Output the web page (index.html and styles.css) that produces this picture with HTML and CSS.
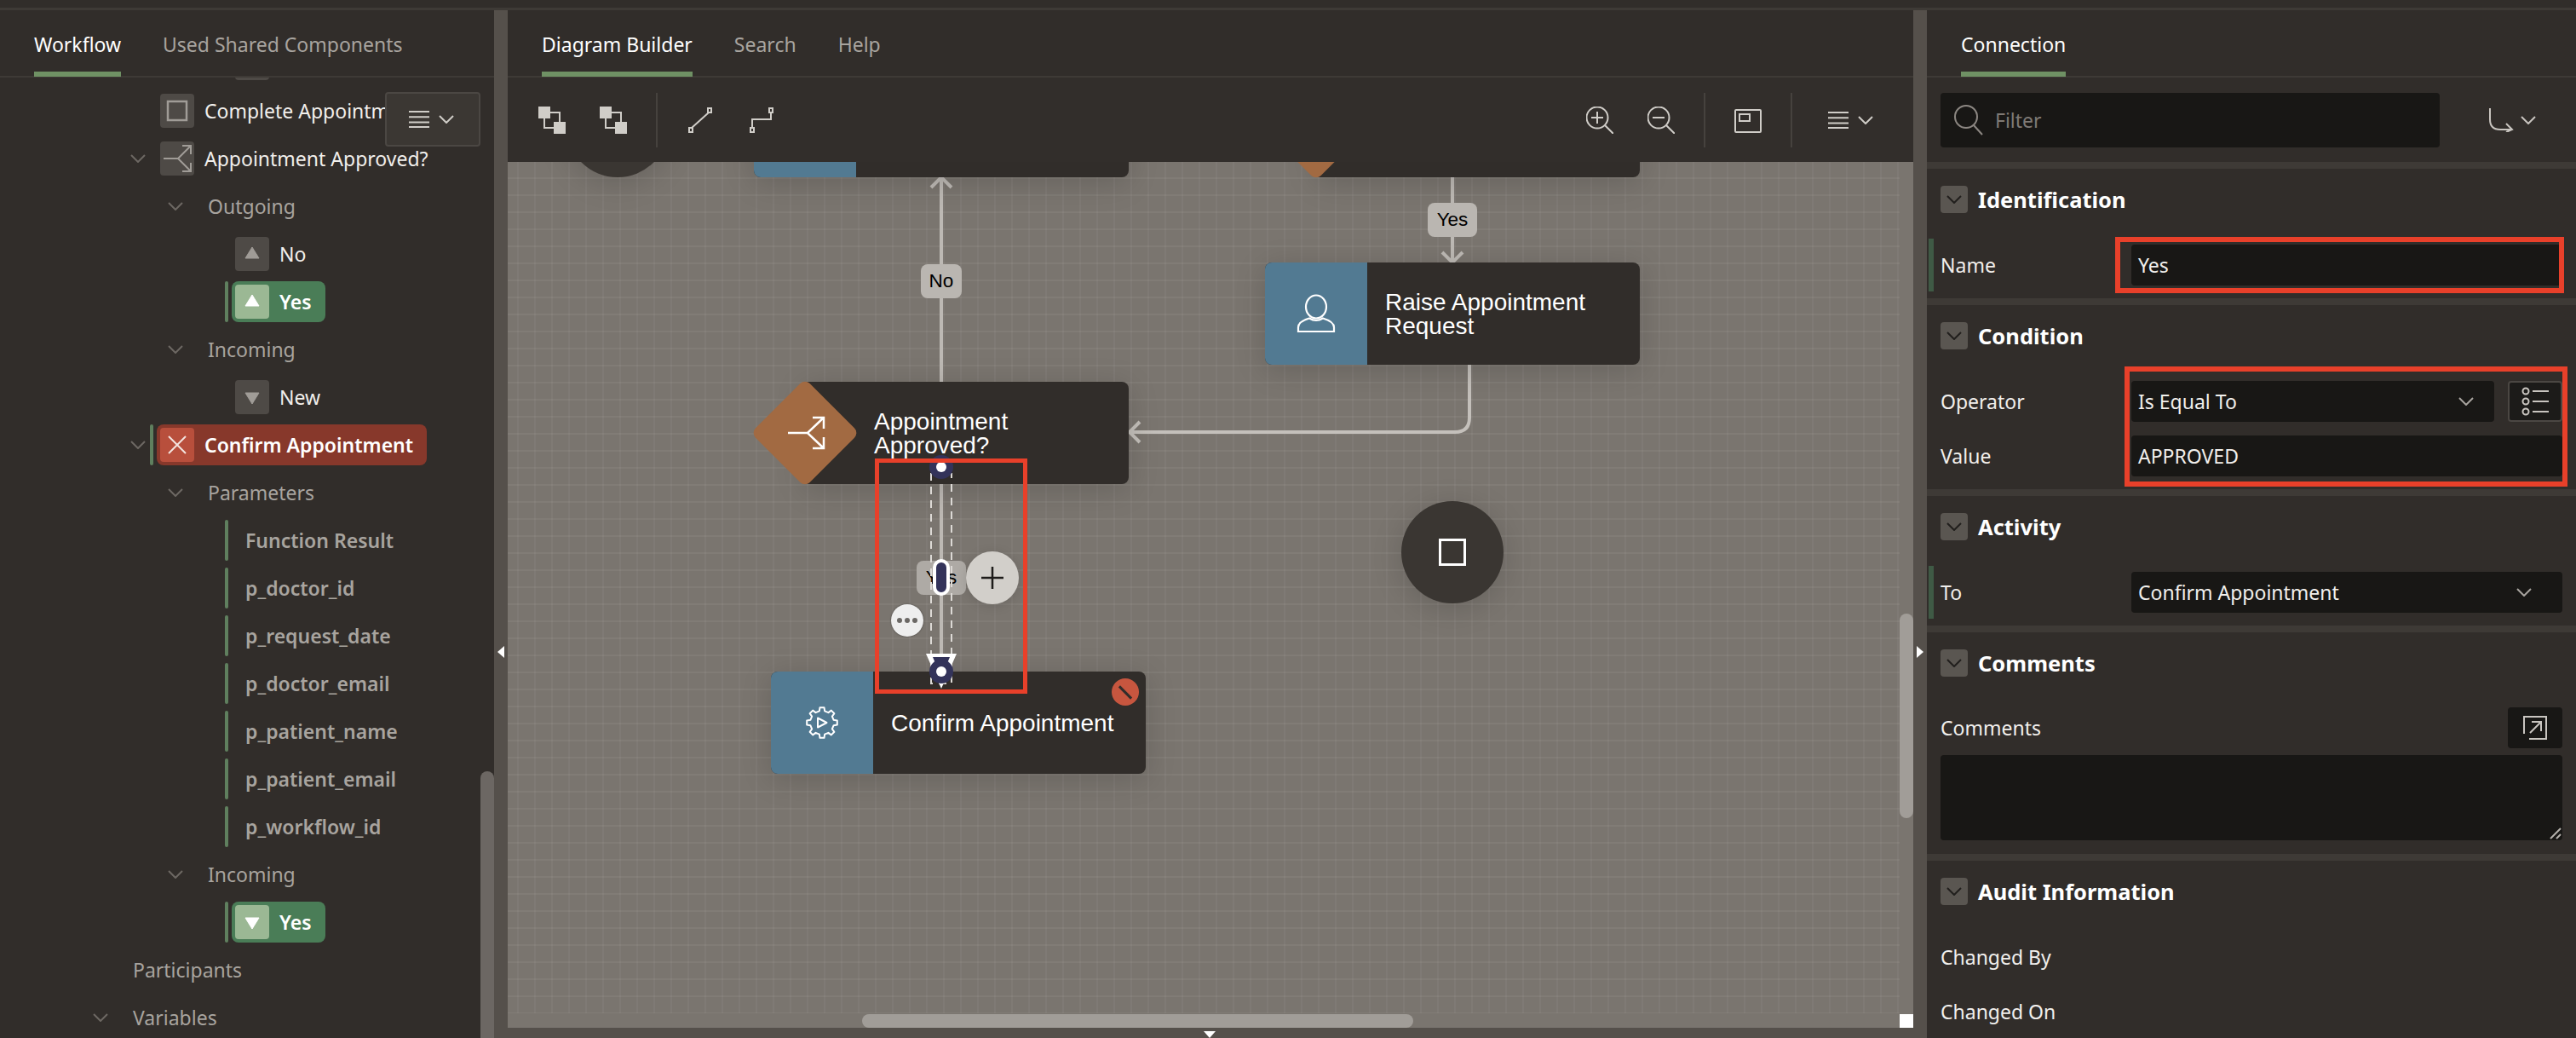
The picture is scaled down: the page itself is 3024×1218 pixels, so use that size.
FILE: index.html
```html
<!DOCTYPE html>
<html lang="en">

<head>
  <meta charset="UTF-8" />
  <title>Workflow Designer</title>
  <link rel="stylesheet" href="styles.css">
</head>

<body>
  <svg class="defs" width="0" height="0">
    <symbol id="chev" viewBox="0 0 18 10"><path d="M1 1l8 8 8-8" fill="none" stroke="currentColor" stroke-width="2" /></symbol>
    <symbol id="tri-up" viewBox="0 0 40 40"><path d="M12 25L20 12l8 13z" fill="currentColor" stroke="currentColor" stroke-width="1" /></symbol>
    <symbol id="tri-down" viewBox="0 0 40 40"><path d="M12 15h16l-8 13z" fill="currentColor" stroke="currentColor" stroke-width="1" /></symbol>
    <symbol id="burger" viewBox="0 0 24 20"><path d="M0 1h24M0 7.3h24M0 13.6h24M0 19h24" fill="none" stroke="currentColor" stroke-width="2" /></symbol>
  </svg>

  <div class="top-strip"></div>

  <div class="workspace">
    <section class="left-panel">
      <div class="tabs">
        <div class="tab active">Workflow</div>
        <div class="tab">Used Shared Components</div>
      </div>
      <div class="tree-wrap">
        <div class="tree">
          <div class="row lvl-4"><span class="ico"></span></div>
          <div class="row lvl-2 no-chev">
            <span class="ico"><svg width="40" height="40"><rect x="9" y="9" width="22" height="22" fill="none" stroke="#a09c97" stroke-width="2.5" /></svg></span>
            <span class="txt">Complete Appointment</span>
          </div>
          <div class="row lvl-2">
            <svg class="chev"><use href="#chev" /></svg>
            <span class="ico"><svg width="40" height="40" fill="none" stroke="#a09c97" stroke-width="2"><path d="M4 20h17l15-15M21 20l15 15M26 5h10v10M26 35h10V25" /></svg></span>
            <span class="txt">Appointment Approved?</span>
          </div>
          <div class="row lvl-3"><svg class="chev"><use href="#chev" /></svg><span class="lbl">Outgoing</span></div>
          <div class="row lvl-4">
            <span class="ico tri"><svg width="40" height="40"><use href="#tri-up" /></svg></span>
            <span class="txt">No</span>
          </div>
          <div class="row lvl-4 marked">
            <i class="mark"></i>
            <span class="pill green">
              <span class="ico"><svg width="40" height="40"><use href="#tri-up" /></svg></span>
              <span class="txt">Yes</span>
            </span>
          </div>
          <div class="row lvl-3"><svg class="chev"><use href="#chev" /></svg><span class="lbl">Incoming</span></div>
          <div class="row lvl-4">
            <span class="ico tri"><svg width="40" height="40"><use href="#tri-down" /></svg></span>
            <span class="txt">New</span>
          </div>
          <div class="row lvl-2 marked">
            <svg class="chev"><use href="#chev" /></svg>
            <i class="mark"></i>
            <span class="pill red">
              <span class="ico"><svg width="40" height="40" fill="none" stroke="#f3e4df" stroke-width="2"><path d="M10 10l20 20M30 10L10 30" /></svg></span>
              <span class="txt">Confirm Appointment</span>
            </span>
          </div>
          <div class="row lvl-3"><svg class="chev"><use href="#chev" /></svg><span class="lbl">Parameters</span></div>
          <div class="row param"><i class="mark"></i><span class="lbl">Function Result</span></div>
          <div class="row param"><i class="mark"></i><span class="lbl">p_doctor_id</span></div>
          <div class="row param"><i class="mark"></i><span class="lbl">p_request_date</span></div>
          <div class="row param"><i class="mark"></i><span class="lbl">p_doctor_email</span></div>
          <div class="row param"><i class="mark"></i><span class="lbl">p_patient_name</span></div>
          <div class="row param"><i class="mark"></i><span class="lbl">p_patient_email</span></div>
          <div class="row param"><i class="mark"></i><span class="lbl">p_workflow_id</span></div>
          <div class="row lvl-3"><svg class="chev"><use href="#chev" /></svg><span class="lbl">Incoming</span></div>
          <div class="row lvl-4 marked">
            <i class="mark"></i>
            <span class="pill green">
              <span class="ico"><svg width="40" height="40"><use href="#tri-down" /></svg></span>
              <span class="txt">Yes</span>
            </span>
          </div>
          <div class="row lvl-1 no-chev"><span class="lbl">Participants</span></div>
          <div class="row lvl-1"><svg class="chev"><use href="#chev" /></svg><span class="lbl">Variables</span></div>
        </div>
        <div class="tree-menu">
          <svg class="burger"><use href="#burger" /></svg>
          <svg class="chev"><use href="#chev" /></svg>
        </div>
        <div class="tree-scroll"></div>
      </div>
    </section>

    <div class="splitter"><i class="arrow-left"></i></div>

    <main class="center">
      <div class="tabs">
        <div class="tab active">Diagram Builder</div>
        <div class="tab">Search</div>
        <div class="tab">Help</div>
      </div>

      <div class="toolbar">
        <div class="tb-group">
          <svg class="tb-icon" viewBox="0 0 32 32" fill="#d0cdc8" stroke="#d0cdc8">
            <rect x="0.5" y="0.5" width="13" height="13" />
            <rect x="18.5" y="18.5" width="13" height="13" />
            <rect x="7" y="7" width="18" height="18" fill="none" stroke-width="2" />
          </svg>
          <svg class="tb-icon" viewBox="0 0 32 32" fill="#d0cdc8" stroke="#d0cdc8">
            <rect x="0.5" y="0.5" width="13" height="13" />
            <rect x="18.5" y="18.5" width="13" height="13" />
            <path d="M13 7h12v12M7 13v12h12" fill="none" stroke-width="2" />
          </svg>
        </div>
        <i class="tb-sep"></i>
        <div class="tb-group">
          <svg class="tb-icon" viewBox="0 0 32 32" fill="none" stroke="#d0cdc8" stroke-width="2">
            <rect x="25" y="2" width="4" height="5" /><rect x="3" y="25" width="4" height="5" />
            <path d="M26 7L6 25" />
          </svg>
          <svg class="tb-icon" viewBox="0 0 32 32" fill="none" stroke="#d0cdc8" stroke-width="2">
            <rect x="25" y="2" width="4" height="5" /><rect x="3" y="25" width="4" height="5" />
            <path d="M27 7v8H5v10" />
          </svg>
        </div>
        <div class="tb-spacer"></div>
        <div class="tb-group">
          <svg class="tb-icon" viewBox="0 0 32 32" fill="none" stroke="#d0cdc8" stroke-width="2">
            <circle cx="13" cy="13" r="12.5" /><path d="M22 22l10 10M13 6v14M6 13h14" />
          </svg>
          <svg class="tb-icon" viewBox="0 0 32 32" fill="none" stroke="#d0cdc8" stroke-width="2">
            <circle cx="13" cy="13" r="12.5" /><path d="M22 22l10 10M6 13h14" />
          </svg>
        </div>
        <i class="tb-sep"></i>
        <svg class="tb-icon" viewBox="0 0 32 32" fill="none" stroke="#d0cdc8" stroke-width="2">
          <rect x="1" y="4" width="30" height="26" rx="1" /><rect x="6" y="9" width="12" height="8" />
        </svg>
        <i class="tb-sep"></i>
        <div class="tb-menu">
          <svg class="burger"><use href="#burger" /></svg>
          <svg class="chev"><use href="#chev" /></svg>
        </div>
      </div>

      <div class="canvas">
        <svg class="wires" viewBox="596 190 1650 1016" width="1650" height="1016" fill="none" stroke="#bdb9b4" stroke-width="4">
          <path d="M1105 208v240M1093 220l12-12 12 12" />
          <path d="M1705 208v100M1693 296l12 12 12-12" />
          <path d="M1725 428v62q0 17-17 17H1326M1338 495l-12 12 12 12" stroke="#c4c0bb" />
          <path d="M1105 568v200" />
        </svg>

        <div class="circle start"></div>

        <div class="node top-left">
          <div class="node-icon"></div>
          <div class="node-text"></div>
        </div>
        <div class="node decision top-right">
          <div class="diamond"></div>
          <div class="node-text"></div>
        </div>
        <div class="node decision approved">
          <div class="diamond"></div>
          <svg class="diamond-icon" width="48" height="48" fill="none" stroke="#fff" stroke-width="2.5">
            <path d="M2 24h23l19-18M25 24l19 18M31 6h13v13M31 42h13V29" />
          </svg>
          <div class="node-text">Appointment<br />Approved?</div>
        </div>
        <div class="node raise">
          <div class="node-icon">
            <svg width="48" height="48" viewBox="-24 -24 48 48" fill="none" stroke="#fff" stroke-width="2.2">
              <ellipse cx="0" cy="-8" rx="12" ry="13.5" />
              <path d="M-21 21v-5c0-6 8-9 13-10.500 5 3 11 3 16 0 5 1.500 13 4.500 13 10.500v5z" />
            </svg>
          </div>
          <div class="node-text">Raise Appointment<br />Request</div>
        </div>
        <div class="node confirm">
          <div class="node-icon">
            <svg width="44" height="44" viewBox="-22 -22 44 44" fill="none" stroke="#fff" stroke-width="2" stroke-linejoin="round">
              <polygon points="-3.15,-13.64 -2.5,-17.8 2.5,-17.8 3.15,-13.64 7.42,-11.87 10.83,-14.38 14.38,-10.83 11.87,-7.42 13.64,-3.15 17.8,-2.5 17.8,2.5 13.64,3.15 11.87,7.42 14.38,10.83 10.83,14.38 7.42,11.87 3.15,13.64 2.5,17.8 -2.5,17.8 -3.15,13.64 -7.42,11.87 -10.83,14.38 -14.38,10.83 -11.87,7.42 -13.64,3.15 -17.8,2.5 -17.8,-2.5 -13.64,-3.15 -11.87,-7.42 -14.38,-10.83 -10.83,-14.38 -7.42,-11.87" />
              <path d="M-5-5.500V5.500L5.500 0z" />
            </svg>
          </div>
          <div class="node-text">Confirm Appointment</div>
          <div class="node-badge"><i></i></div>
        </div>
        <div class="circle end"><i></i></div>

        <div class="edge-label label-no">No</div>
        <div class="edge-label label-yes">Yes</div>
        <div class="edge-label label-sel">Yes</div>

        <svg class="wires select" viewBox="596 190 1650 1016" width="1650" height="1016" fill="none">
          <path d="M1093 555V802h24V555" stroke="#dcd9d5" stroke-width="2" stroke-dasharray="9 7" />
          <path d="M1087 767h36l-18 41z" fill="#fff" />
          <path d="M1095 771h20l-10 24z" fill="#33335a" />
          <circle cx="1105" cy="548" r="14" fill="#33335a" />
          <circle cx="1105" cy="548" r="6" fill="#fff" />
          <circle cx="1105" cy="788" r="14" fill="#33335a" />
          <circle cx="1105" cy="788" r="6" fill="#fff" />
          <rect x="1097" y="658" width="16" height="39" rx="8" fill="#33335a" stroke="#fff" stroke-width="4" />
        </svg>

        <div class="edge-btn plus">
          <svg width="28" height="28" stroke="#1e1c1a" stroke-width="2.5"><path d="M14 1v26M1 14h26" /></svg>
        </div>
        <div class="edge-btn more"><i></i><i></i><i></i></div>

        <div class="callout"></div>

        <div class="vscroll"><div class="vthumb"></div></div>
        <div class="hscroll"><div class="hthumb"></div></div>
        <div class="corner"></div>
      </div>

      <div class="bottom-strip"><i class="arrow-down"></i></div>
    </main>

    <div class="splitter"><i class="arrow-right"></i></div>

    <aside class="right-panel">
      <div class="tabs">
        <div class="tab active">Connection</div>
      </div>

      <div class="filter-row">
        <div class="filter">
          <svg width="34" height="36" fill="none" stroke="#8c8782" stroke-width="2"><circle cx="14" cy="14" r="13" /><path d="M23 24l10 11" /></svg>
          <span>Filter</span>
        </div>
        <svg class="route" width="30" height="28" fill="none" stroke="#c9c5c0" stroke-width="2"><path d="M2 0v13q0 12 12 12h14M21 18l7 7-7 3" /></svg>
        <svg class="chev"><use href="#chev" /></svg>
      </div>

      <section class="group">
        <header class="group-head"><span class="toggle"><svg class="chev"><use href="#chev" /></svg></span><h2>Identification</h2></header>
        <div class="prop required"><label>Name</label><div class="field">Yes</div></div>
      </section>

      <section class="group">
        <header class="group-head"><span class="toggle"><svg class="chev"><use href="#chev" /></svg></span><h2>Condition</h2></header>
        <div class="prop">
          <label>Operator</label>
          <div class="field select short">Is Equal To<svg class="chev"><use href="#chev" /></svg></div>
          <span class="list-btn">
            <svg width="32" height="36" fill="none" stroke="#c9c5c0" stroke-width="2">
              <circle cx="5" cy="6" r="3.500" /><circle cx="5" cy="18" r="3.500" /><circle cx="5" cy="30" r="3.500" />
              <path d="M13 6h19M13 18h19M13 30h19" />
            </svg>
          </span>
        </div>
        <div class="prop gap"><label>Value</label><div class="field">APPROVED</div></div>
      </section>

      <section class="group">
        <header class="group-head"><span class="toggle"><svg class="chev"><use href="#chev" /></svg></span><h2>Activity</h2></header>
        <div class="prop required"><label>To</label><div class="field select">Confirm Appointment<svg class="chev"><use href="#chev" /></svg></div></div>
      </section>

      <section class="group">
        <header class="group-head"><span class="toggle"><svg class="chev"><use href="#chev" /></svg></span><h2>Comments</h2></header>
        <div class="comment-head">
          <label>Comments</label>
          <span class="expand-btn">
            <svg width="30" height="30" fill="none" stroke="#c9c5c0" stroke-width="2"><path d="M2 22V2h26v26H8M9 21L22 8M11 8h11v11" /></svg>
          </span>
        </div>
        <div class="comment-box">
          <svg class="grip" width="14" height="14" stroke="#b5b1ac" stroke-width="2"><path d="M1 13L13 1M8 13l5-5" /></svg>
        </div>
      </section>

      <section class="group">
        <header class="group-head"><span class="toggle"><svg class="chev"><use href="#chev" /></svg></span><h2>Audit Information</h2></header>
        <div class="prop"><label>Changed By</label></div>
        <div class="prop gap"><label>Changed On</label></div>
      </section>

      <div class="callout name-box"></div>
      <div class="callout cond-box"></div>
    </aside>
  </div>
</body>

</html>
```
FILE: styles.css
```css
* {
  box-sizing: border-box;
}

body {
  margin: 0;
  width: 3024px;
  height: 1218px;
  overflow: hidden;
  background: #312d2a;
  color: #f1efec;
  font-family: "Noto Sans", sans-serif;
  font-size: 23px;
}

.defs {
  position: absolute;
}

.chev {
  width: 18px;
  height: 10px;
  flex: none;
  color: #6d6863;
}

.burger {
  width: 24px;
  height: 20px;
  flex: none;
}

.top-strip {
  height: 12px;
  border-bottom: 3px solid #3e3a36;
}

.workspace {
  display: flex;
  height: 1206px;
}

.splitter {
  width: 16px;
  flex: none;
  background: #55504b;
  position: relative;
}

.arrow-left,
.arrow-right {
  position: absolute;
  top: 746px;
  width: 0;
  height: 0;
  border-top: 7px solid transparent;
  border-bottom: 7px solid transparent;
}

.arrow-left {
  left: 4px;
  border-right: 8px solid #fff;
}

.arrow-right {
  left: 4px;
  border-left: 8px solid #fff;
}

/* tabs */
.tabs {
  height: 79px;
  display: flex;
  gap: 49px;
  padding-left: 40px;
  border-bottom: 2px solid #3e3a36;
}

.tab {
  height: 78px;
  padding-top: 22px;
  line-height: 36px;
  color: #a8a49f;
  border-bottom: 6px solid transparent;
}

.tab.active {
  color: #fff;
  border-bottom-color: #6f9164;
}

/* left panel */
.left-panel {
  width: 580px;
  flex: none;
}

.tree-wrap {
  position: relative;
  height: 1127px;
  overflow: hidden;
}

.tree {
  margin-top: -41px;
}

.row {
  height: 48px;
  margin-bottom: 8px;
  display: flex;
  align-items: center;
  white-space: nowrap;
}

.lvl-1 {
  padding-left: 109px;
}

.lvl-1 .chev {
  margin-right: 29px;
}

.lvl-1.no-chev {
  padding-left: 156px;
}

.lvl-2 {
  padding-left: 153px;
}

.lvl-2 .chev {
  margin-right: 17px;
}

.lvl-2.no-chev {
  padding-left: 188px;
}

.lvl-2.marked .chev {
  margin-right: 5px;
}

.lvl-3 {
  padding-left: 197px;
}

.lvl-3 .chev {
  margin-right: 29px;
}

.lvl-4 {
  padding-left: 276px;
}

.lvl-4.marked {
  padding-left: 264px;
}

.param {
  padding-left: 264px;
}

.param .mark {
  margin-right: 20px;
}

.mark {
  width: 4px;
  height: 48px;
  flex: none;
  margin-right: 4px;
  border-radius: 2px;
  background: #5f7f5e;
}

.ico {
  width: 40px;
  height: 40px;
  flex: none;
  display: block;
  border-radius: 4px;
  background: #4e4a46;
}

.ico svg {
  display: block;
}

.ico.tri {
  color: #a09c97;
}

.txt {
  margin-left: 12px;
}

.lbl {
  color: #a8a49f;
}

.param .lbl {
  font-weight: 600;
}

.pill {
  height: 48px;
  display: flex;
  align-items: center;
  padding: 0 16px 0 4px;
  border-radius: 8px;
  font-weight: 600;
  color: #fff;
}

.pill.green {
  background: #4a7d57;
}

.pill.green .ico {
  background: #9bb894;
  color: #fff;
}

.pill.red {
  background: #87382b;
}

.pill.red .ico {
  background: #b84f3c;
}

.tree-menu {
  position: absolute;
  left: 452px;
  top: 17px;
  width: 112px;
  height: 64px;
  display: flex;
  align-items: center;
  padding-left: 26px;
  gap: 11px;
  background: #3b3733;
  border: 2px solid #4b4743;
  border-radius: 4px;
  color: #d0cdc8;
}

.tree-menu .chev {
  color: #d0cdc8;
}

.tree-scroll {
  position: absolute;
  left: 564px;
  top: 814px;
  width: 16px;
  bottom: 0;
  background: #6c6763;
  border-radius: 8px 8px 0 0;
}

/* center */
.center {
  width: 1650px;
  flex: none;
}

.toolbar {
  height: 99px;
  display: flex;
  align-items: center;
  padding: 0 47px 0 36px;
  background: #322e2b;
}

.tb-group {
  display: flex;
  gap: 40px;
}

.tb-icon {
  width: 32px;
  height: 32px;
  display: block;
}

.tb-sep {
  width: 2px;
  height: 64px;
  margin: 0 34px;
  background: #46423e;
}

.tb-spacer {
  flex: 1;
}

.tb-menu {
  display: flex;
  align-items: center;
  gap: 11px;
  margin-left: 8px;
  color: #d0cdc8;
}

.tb-menu .chev {
  color: #d0cdc8;
}

.canvas {
  position: relative;
  height: 1016px;
  overflow: hidden;
  background-color: #7a756f;
  background-image:
    linear-gradient(to right, rgba(255, 255, 255, 0.04) 2px, transparent 2px),
    linear-gradient(to bottom, rgba(255, 255, 255, 0.05) 2px, transparent 2px);
  background-size: 20px 20px;
  background-position: 11px 18px;
}

.wires {
  position: absolute;
  left: 0;
  top: 0;
}

.node {
  position: absolute;
  width: 440px;
  height: 120px;
  display: flex;
  border-radius: 8px;
  background: #312d2a;
  color: #fff;
  font-family: "Liberation Sans", sans-serif;
  font-size: 28px;
  line-height: 28px;
  box-shadow: 0 6px 36px rgba(0, 0, 0, 0.16);
}

.node-icon {
  width: 120px;
  flex: none;
  display: flex;
  align-items: center;
  justify-content: center;
  background: #527a92;
  border-radius: 8px 0 0 8px;
}

.node-text {
  flex: 1;
  display: flex;
  align-items: center;
  padding: 2px 0 0 21px;
}

.node.decision {
  background: none;
  box-shadow: none;
}

.decision .node-text {
  margin-left: 60px;
  padding-left: 81px;
  background: #312d2a;
  border-radius: 0 8px 8px 0;
  box-shadow: 0 6px 36px rgba(0, 0, 0, 0.16);
}

.diamond {
  position: absolute;
  left: 15px;
  top: 15px;
  width: 90px;
  height: 90px;
  border-radius: 8px;
  background: #a26a42;
  transform: rotate(45deg);
  z-index: 1;
}

.diamond-icon {
  position: absolute;
  left: 38px;
  top: 36px;
  z-index: 2;
}

.top-left {
  left: 289px;
  top: -102px;
}

.top-right {
  left: 889px;
  top: -102px;
}

.approved {
  left: 289px;
  top: 258px;
}

.raise {
  left: 889px;
  top: 118px;
}

.confirm {
  left: 309px;
  top: 598px;
}

.node-badge {
  position: absolute;
  right: 8px;
  top: 8px;
  width: 32px;
  height: 32px;
  display: flex;
  align-items: center;
  justify-content: center;
  border-radius: 50%;
  background: #c7563f;
}

.node-badge i {
  width: 20px;
  height: 3px;
  background: #312d2a;
  transform: rotate(45deg);
}

.circle {
  position: absolute;
  width: 120px;
  height: 120px;
  display: flex;
  align-items: center;
  justify-content: center;
  border-radius: 50%;
  background: #3a3632;
  box-shadow: 0 6px 36px rgba(0, 0, 0, 0.16);
}

.circle.start {
  left: 69px;
  top: -102px;
}

.circle.end {
  left: 1049px;
  top: 398px;
}

.circle i {
  width: 32px;
  height: 32px;
  border: 3px solid #fff;
}

.edge-label {
  position: absolute;
  height: 40px;
  display: flex;
  align-items: center;
  justify-content: center;
  border-radius: 8px;
  background: #bab6b1;
  color: #000;
  font-family: "Liberation Sans", sans-serif;
  font-size: 22.500px;
}

.label-no {
  left: 485px;
  top: 120px;
  width: 48px;
}

.label-yes {
  left: 1080px;
  top: 48px;
  width: 58px;
}

.label-sel {
  left: 480px;
  top: 468px;
  width: 58px;
  background: #aeaaa5;
}

.edge-btn {
  position: absolute;
  display: flex;
  align-items: center;
  justify-content: center;
  border-radius: 50%;
}

.plus {
  left: 538px;
  top: 457px;
  width: 62px;
  height: 62px;
  background: #d2cfca;
  box-shadow: 0 2px 14px rgba(0, 0, 0, 0.12);
}

.plus svg {
  display: block;
}

.more {
  left: 450px;
  top: 519px;
  width: 38px;
  height: 38px;
  gap: 3px;
  background: #eeeeee;
  box-shadow: 0 0 2px rgba(0, 0, 0, 0.5);
}

.more i {
  width: 6px;
  height: 6px;
  border-radius: 50%;
  background: #6b6865;
}

.callout {
  position: absolute;
  border: 5px solid #e8402a;
}

.canvas > .callout {
  left: 431px;
  top: 348px;
  width: 179px;
  height: 276px;
}

.vscroll {
  position: absolute;
  right: 0;
  top: 0;
  bottom: 0;
  width: 16px;
  background: #7a756f;
}

.vthumb {
  position: absolute;
  left: 0;
  right: 0;
  top: 530px;
  height: 240px;
  border-radius: 8px;
  background: #a19d98;
}

.hscroll {
  position: absolute;
  left: 0;
  right: 0;
  bottom: 0;
  height: 17px;
  background: #7a756f;
}

.hthumb {
  position: absolute;
  left: 416px;
  top: 1px;
  bottom: 0;
  width: 647px;
  border-radius: 8px;
  background: #a19d98;
}

.corner {
  position: absolute;
  right: 0;
  bottom: 0;
  width: 16px;
  height: 16px;
  background: #fff;
}

.bottom-strip {
  height: 12px;
  background: #55504b;
  position: relative;
}

.arrow-down {
  position: absolute;
  left: 817px;
  top: 4px;
  width: 0;
  height: 0;
  border-left: 7px solid transparent;
  border-right: 7px solid transparent;
  border-top: 8px solid #fff;
}

/* right panel */
.right-panel {
  width: 762px;
  flex: none;
  position: relative;
  overflow: hidden;
}

.filter-row {
  height: 99px;
  display: flex;
  align-items: center;
  padding: 0 16px;
}

.filter {
  width: 586px;
  height: 64px;
  display: flex;
  align-items: center;
  gap: 14px;
  padding-left: 16px;
  border-radius: 4px;
  background: #181715;
  color: #7f7a75;
}

.route {
  margin-left: 57px;
}

.filter-row .chev {
  margin-left: 8px;
  color: #c9c5c0;
}

.group {
  border-top: 8px solid #3e3a36;
  padding-bottom: 8px;
}

.group-head {
  margin: 20px 0 30px;
  height: 32px;
  display: flex;
  align-items: center;
  padding-left: 16px;
  gap: 12px;
}

.group-head h2 {
  margin: 0;
  font-size: 25.500px;
  font-weight: 700;
  color: #fff;
}

.toggle {
  width: 32px;
  height: 32px;
  display: flex;
  align-items: center;
  justify-content: center;
  border-radius: 4px;
  background: #5a5651;
}

.toggle .chev {
  color: #211f1d;
}

.prop {
  height: 62px;
  display: flex;
  align-items: center;
  margin-left: 2px;
  padding: 0 16px 0 8px;
  border-left: 6px solid transparent;
}

.prop.required {
  border-left-color: #3f5a45;
}

.prop.gap {
  margin-top: 2px;
}

.prop label {
  width: 224px;
  flex: none;
}

.field {
  height: 48px;
  flex: 1;
  display: flex;
  align-items: center;
  justify-content: space-between;
  padding: 0 36px 0 8px;
  border-radius: 4px;
  background: #181715;
}

.field.short {
  flex: none;
  width: 426px;
  padding-right: 24px;
}

.field .chev {
  color: #a8a49f;
}

.list-btn {
  width: 64px;
  height: 48px;
  margin-left: 16px;
  display: flex;
  align-items: center;
  justify-content: center;
  border: 2px solid #4b4743;
  border-radius: 4px;
  background: #1c1b19;
}

.comment-head {
  height: 60px;
  display: flex;
  align-items: center;
  justify-content: space-between;
  padding: 0 16px;
}

.expand-btn {
  width: 64px;
  height: 48px;
  display: flex;
  align-items: center;
  justify-content: center;
  border-radius: 4px;
  background: #181715;
}

.comment-box {
  position: relative;
  height: 100px;
  margin: 2px 16px 8px;
  border-radius: 4px;
  background: #181715;
}

.grip {
  position: absolute;
  right: 1px;
  bottom: 1px;
}

.name-box {
  left: 221px;
  top: 266px;
  width: 527px;
  height: 66px;
  border-width: 6px;
}

.cond-box {
  left: 232px;
  top: 418px;
  width: 520px;
  height: 141px;
  border-width: 6px;
}
```
